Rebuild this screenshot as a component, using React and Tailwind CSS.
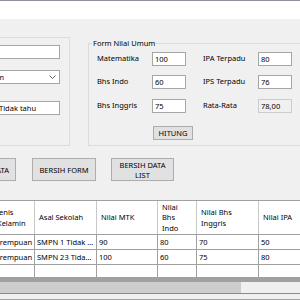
const box = "h-[14px] border border-[#a6a6a6] bg-white px-[2px] leading-[12px] whitespace-nowrap overflow-hidden";
const btn = "flex items-center justify-center border border-[#adadad] bg-[#e1e1e1] text-center leading-[10px]";

const cols = ["w-[46px]", "w-[62px]", "w-[61px]", "w-[39px]", "w-[62px]", "w-[60px]"];
const headPad = ["pl-[8px] pr-[3px]", "pl-[4px] pr-[3px]", "pl-[4px] pr-[3px]", "pl-[4px] pr-[10px]", "pl-[4px] pr-[3px]", "pl-[4px] pr-[3px]"];

const header = ["Jenis Kelamin", "Asal Sekolah", "Nilai MTK", "Nilai Bhs Indo", "Nilai Bhs Inggris", "Nilai IPA"];

const rows = [
  ["Perempuan", "SMPN 1 Tidak tahu", "90", "80", "70", "50"],
  ["Perempuan", "SMPN 23 Tidak tahu", "100", "60", "75", "80"],
];

function Field({ label, value, disabled }) {
  return (
    <>
      <div className="w-[55px] shrink-0 flex items-center">{label}</div>
      <div className={disabled ? "h-[14px] w-[34px] shrink-0 border border-[#cccccc] bg-[#f0f0f0] px-[2px] leading-[12px]" : box + " w-[34px] shrink-0"}>
        {value}
      </div>
    </>
  );
}

export default function App() {
  return (
    <div className="w-[300px] h-[300px] overflow-hidden bg-[#f0f0f0] font-['Noto_Sans',sans-serif] text-[7.5px] text-black">
      <div className="h-px bg-[#8d929a]" />
      <div className="h-[18px] bg-white" />

      <div className="flex items-start">
        {/* form data siswa (terpotong) */}
        <div className="-ml-[21px] mt-[18px] w-[91px] h-[109px] shrink-0 border border-[#dcdcdc] pt-[7px] pr-[9px] flex flex-col items-end">
          <div className={box + " w-[63px]"}></div>
          <div className={box + " w-[63px] mt-[11px] flex items-center justify-between pr-[3px]"}>
            <span className="-ml-[3px]">m</span>
            <svg width="7" height="4" viewBox="0 0 7 4" className="shrink-0">
              <path d="M0.5 0.5 L3.5 3.5 L6.5 0.5" fill="none" stroke="#606060" strokeWidth="1" />
            </svg>
          </div>
          <div className={box + " w-[63px] mt-[17px]"}>
            <span className="-ml-[1px]">Tidak tahu</span>
          </div>
        </div>

        {/* form nilai umum */}
        <fieldset className="ml-[18px] mt-[19px] w-[250px] shrink-0 border border-[#dcdcdc] pb-[5px]">
          <legend className="ml-[3px] px-[1px] leading-[10px]">Form Nilai Umum</legend>
          <div className="pt-[4px] pl-[8px]">
            <div className="flex h-[14px]">
              <Field label="Matematika" value="100" />
              <div className="w-[17px] shrink-0" />
              <Field label="IPA Terpadu" value="80" />
            </div>
            <div className="flex h-[14px] mt-[9px]">
              <Field label="Bhs Indo" value="60" />
              <div className="w-[17px] shrink-0" />
              <Field label="IPS Terpadu" value="76" />
            </div>
            <div className="flex h-[14px] mt-[10px]">
              <Field label="Bhs Inggris" value="75" />
              <div className="w-[17px] shrink-0" />
              <Field label="Rata-Rata" value="78,00" disabled />
            </div>
            <div className={btn + " ml-[56px] mt-[13px] w-[40px] h-[14px]"}>HITUNG</div>
          </div>
        </fieldset>
      </div>

      {/* tombol */}
      <div className="flex mt-[12px]">
        <div className={btn + " -ml-[46px] w-[62px] h-[23px] shrink-0"}>SIMPAN DATA</div>
        <div className={btn + " ml-[16px] w-[64px] h-[23px] shrink-0"}>BERSIH FORM</div>
        <div className={btn + " ml-[15px] w-[63px] h-[23px] shrink-0 px-[7px]"}>BERSIH DATA LIST</div>
      </div>

      {/* tabel data */}
      <div className="mt-[19px] -ml-[11px] w-[340px] bg-white">
        <div className="flex h-[35px] border-y border-[#a0a0a0]">
          {header.map((h, i) => (
            <div key={h} className={cols[i] + " " + headPad[i] + " shrink-0 flex items-center border-r border-[#c8c8c8] leading-[10.5px]"}>
              <span>{h}</span>
            </div>
          ))}
        </div>
        {rows.map((r, ri) => (
          <div key={ri} className="flex h-[15px] border-b border-[#a0a0a0]">
            {r.map((c, i) => (
              <div key={i} className={cols[i] + " shrink-0 flex items-center border-r border-[#a0a0a0] pl-[2px] pr-[1px] overflow-hidden"}>
                <span className={i === 0 ? "whitespace-nowrap leading-[13px]" : "min-w-0 truncate leading-[13px]"}>{c}</span>
              </div>
            ))}
          </div>
        ))}
        <div className="flex h-[12px]">
          {cols.map((c, i) => (
            <div key={i} className={c + " shrink-0 border-r border-[#a0a0a0]"} />
          ))}
        </div>
      </div>
      <div className="h-[5px] bg-[#a0a0a0]" />
      <div className="flex h-[11px] bg-[#f0f0f0]">
        <div className="w-[241px] bg-[#cdcdcd]" />
      </div>
      <div className="h-px bg-[#8a8a8a]" />
      <div className="h-[5px] bg-[#f0f0f0]" />
      <div className="h-px bg-[#a0a0a0]" />
    </div>
  );
}
